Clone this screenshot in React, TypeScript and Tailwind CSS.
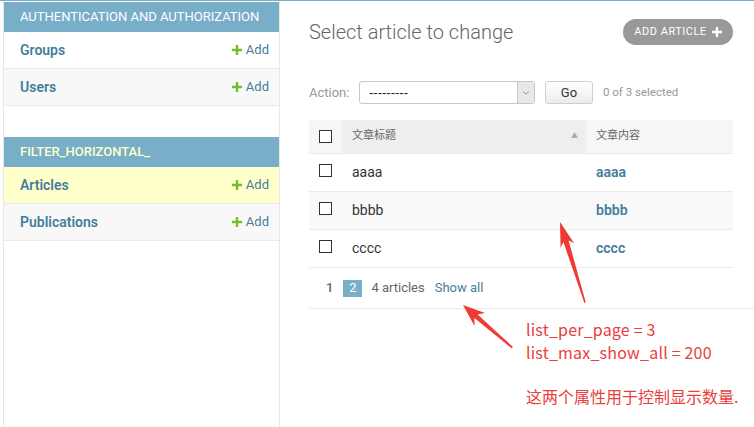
import React from 'react';
import { ChevronDown } from 'lucide-react';

const CJK = "font-['Roboto','Noto_Sans_CJK_SC',sans-serif]";

const modules = [
  {
    name: 'Authentication and Authorization',
    current: false,
    models: ['Groups', 'Users'],
  },
  {
    name: 'Filter_horizontal_',
    current: true,
    models: ['Articles', 'Publications'],
  },
];

const rows = ['aaaa', 'bbbb', 'cccc'];

const Plus: React.FC<{ className?: string }> = ({ className }) => (
  <svg viewBox="0 0 10 10" className={className}>
    <path d="M3.8 0h2.4v3.8H10v2.4H6.2V10H3.8V6.2H0V3.8h3.8z" fill="currentColor" />
  </svg>
);

const Checkbox = () => <span className="block w-[13px] h-[13px] border border-[#333] bg-white" />;

const Sidebar = () => (
  <nav className="w-[277px] ml-[3px] shrink-0 border-l border-r border-[#e8e8e8] pt-[1px] h-[426px]">
    {modules.map((m, i) => (
      <div key={m.name} className={i > 0 ? 'mt-[31px]' : ''}>
        <div
          className={`h-[30px] bg-[#79aec8] pl-4 flex items-center text-[13px] uppercase ${
            m.current ? 'text-[#ffffcc] font-medium' : 'text-white'
          }`}
        >
          {m.name}
        </div>
        {m.models.map((model) => {
          const active = m.current && model === 'Articles';
          return (
            <div
              key={model}
              className={`h-[37px] border-b border-[#eaeaea] flex items-center justify-between pl-4 pr-[10px] ${
                active ? 'bg-[#ffffcc]' : model === 'Users' || model === 'Publications' ? 'bg-[#f8f8f8]' : 'bg-white'
              }`}
            >
              <span className="text-[14px] font-semibold text-[#447e9b]">{model}</span>
              <span className="flex items-center gap-[4px] text-[13px] text-[#447e9b]">
                <Plus className="w-[10px] h-[10px] text-[#70bf2b]" />
                Add
              </span>
            </div>
          );
        })}
      </div>
    ))}
  </nav>
);

const ChangeList = () => (
  <main className="flex-1 pl-[29px] pr-[21px] pt-[17px]">
    <div className="flex items-start justify-between">
      <h1 className="text-[20px] font-light text-[#666] mt-[1px] leading-[26px]">Select article to change</h1>
      <span className="mt-[1px] h-[26px] w-[110px] rounded-full bg-[#999] text-white text-[11px] tracking-[0.5px] uppercase flex items-center justify-center gap-[5px]">
        Add article
        <Plus className="w-[10px] h-[10px]" />
      </span>
    </div>

    <div className="mt-[36px] flex items-center h-[23px] text-[13px]">
      <span className="text-[#999] w-[50px]">Action:</span>
      <div className="w-[176px] h-[23px] border border-[#c8c8c8] rounded-[3px] flex items-stretch bg-white">
        <span className="flex-1 pl-[9px] text-[13px] leading-[21px] text-[#222] font-['Liberation_Sans',sans-serif]">---------</span>
        <span className="w-[17px] bg-[#e8e8e8] border-l border-[#c8c8c8] flex items-center justify-center rounded-r-[2px]">
          <ChevronDown className="w-[10px] h-[10px] text-[#555]" strokeWidth={1.5} />
        </span>
      </div>
      <span className="ml-[10px] w-[48px] h-[23px] border border-[#cfcfcf] rounded-[3px] bg-gradient-to-b from-white to-[#ececec] flex items-center justify-center text-[13px] text-[#333]">
        Go
      </span>
      <span className="ml-[10px] text-[11.5px] text-[#999]">0 of 3 selected</span>
    </div>

    <div className={`mt-[16px] ${CJK}`}>
      <div className="flex h-[34px] border-b border-[#eaeaea] text-[11px] text-[#666]">
        <div className="w-[33px] bg-[#f6f6f6] flex items-center justify-center">
          <Checkbox />
        </div>
        <div className="w-[244px] bg-[#eeeeee] flex items-center justify-between pl-[10px] pr-[8px]">
          <span>文章标题</span>
          <span className="text-[7px] text-[#aaa]">▲</span>
        </div>
        <div className="flex-1 bg-[#f6f6f6] flex items-center pl-[10px]">文章内容</div>
      </div>
      {rows.map((r, i) => (
        <div key={r} className={`flex h-[38px] border-b border-[#eaeaea] items-center ${i === 1 ? 'bg-[#f9f9f9]' : 'bg-white'}`}>
          <div className="w-[33px] flex justify-center -mt-[4px]">
            <Checkbox />
          </div>
          <div className="w-[244px] pl-[10px] text-[14px] text-[#333]">{r}</div>
          <div className="flex-1 pl-[10px] text-[14px] font-semibold text-[#447e9b]">{r}</div>
        </div>
      ))}
      <div className="h-[41px] -mr-[21px] border-b border-[#eaeaea] flex items-center pl-[17px] text-[13px] text-[#666]">
        <span className="font-medium">1</span>
        <span className="ml-[10px] w-[19px] h-[17px] bg-[#79aec8] text-white flex items-center justify-center">2</span>
        <span className="ml-[9px]">4 articles</span>
        <span className="ml-[10px] text-[#447e9b]">Show all</span>
      </div>
    </div>
  </main>
);

const Annotation = () => (
  <>
    <svg className="absolute inset-0 pointer-events-none" width="754" height="427" viewBox="0 0 754 427">
      <polygon
        points="560,222 574,243 568.6,240.6 585.8,302.6 584.4,303 563.4,242 560.6,248"
        fill="#ee3a36"
      />
      <polygon
        points="463,305 485,313 477.6,314.4 513,347 511.6,348.2 474.4,318 474.5,326"
        fill="#ee3a36"
      />
    </svg>
    <div className="absolute left-[526px] top-[318px] text-[16px] leading-[23px] tracking-[0.2px] text-[#e8403c] font-['Noto_Sans_CJK_SC','Noto_Sans',sans-serif]">
      <div>list_per_page = 3</div>
      <div>list_max_show_all = 200</div>
      <div className="mt-[21px] tracking-normal">这两个属性用于控制显示数量.</div>
    </div>
  </>
);

export default function App() {
  return (
    <div className="relative w-[754px] h-[427px] overflow-hidden bg-white font-['Roboto','Noto_Sans_CJK_SC',sans-serif]">
      <div className="h-px bg-[#79aec8]" />
      <div className="flex">
        <Sidebar />
        <ChangeList />
      </div>
      <Annotation />
    </div>
  );
}
